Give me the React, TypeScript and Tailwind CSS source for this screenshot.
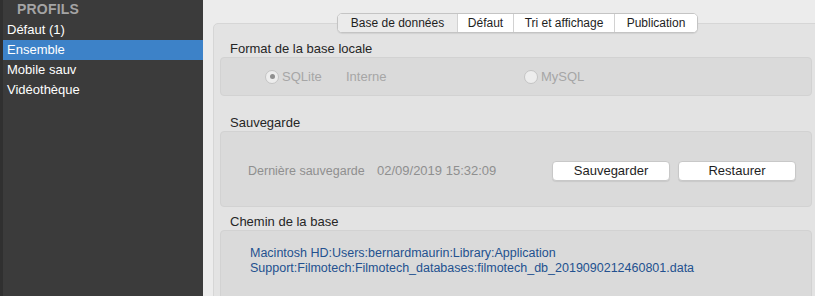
import React from "react";

function Radio({ checked }: { checked?: boolean }) {
  return (
    <span className="w-[14px] h-[14px] rounded-full bg-[#ededed] border border-[#c4c4c4] flex items-center justify-center shrink-0">
      {checked && <span className="w-[5px] h-[5px] rounded-full bg-[#8f8f8f]" />}
    </span>
  );
}

export default function App() {
  const items = ["Défaut (1)", "Ensemble", "Mobile sauv", "Vidéothèque"];
  const tabs: [string, string, boolean][] = [
    ["Base de données", "w-[119px]", true],
    ["Défaut", "w-[56px]", false],
    ["Tri et affichage", "w-[101px]", false],
    ["Publication", "w-[83px]", false],
  ];
  return (
    <div className="w-[815px] h-[296px] overflow-hidden flex font-['Liberation_Sans',Arial,sans-serif]">
      <aside className="w-[203px] h-[296px] shrink-0 bg-[#3b3b3b] border-l-[3px] border-[#303030]">
        <div className="h-[19px] flex items-center pl-[14px] text-[14px] font-bold text-[#a4a4a4] tracking-[0.2px]">
          PROFILS
        </div>
        <div className="pt-[1px]">
          {items.map((it) => (
            <div
              key={it}
              className={
                "h-[20px] flex items-center pl-[4px] text-[13px] text-white " +
                (it === "Ensemble" ? "bg-[#3d82c8]" : "")
              }
            >
              {it}
            </div>
          ))}
        </div>
      </aside>
      <main className="w-[629px] shrink-0 h-[296px] bg-[#ececec] pt-[13px] px-[10px]">
        <div className="relative z-10 flex justify-center">
          <div className="flex h-[20px] bg-white border border-[#c4c4c4] rounded-[5px] shadow-[0_1px_1px_rgba(0,0,0,0.08)] overflow-hidden">
            {tabs.map(([t, w, sel], i) => (
              <div
                key={t}
                className={
                  w +
                  " flex items-center justify-center text-[12px] text-[#1e1e1e] " +
                  (sel ? "bg-[#ebebeb] " : "bg-white ") +
                  (i > 0 ? "border-l border-[#d2d2d2]" : "")
                }
              >
                {t}
              </div>
            ))}
          </div>
        </div>
        <div className="-mt-[10px] h-[300px] bg-[#e3e3e3] border border-[#d6d6d6] rounded-[5px] pl-[6px] pr-[9px] pt-[17px]">
          <div className="h-[16px] leading-[16px] pl-[10px] text-[13px] text-[#262626]">
            Format de la base locale
          </div>
          <div className="h-[39px] bg-[#dadada] border border-[#d2d2d2] rounded-[4px] flex items-center pl-[44px] text-[13px] text-[#a6a6a6]">
            <Radio checked />
            <span className="w-[67px] pl-[3px]">SQLite</span>
            <span className="w-[178px]">Interne</span>
            <Radio />
            <span className="pl-[3px]">MySQL</span>
          </div>

          <div className="mt-[19px] h-[16px] leading-[16px] pl-[10px] text-[13px] text-[#262626]">
            Sauvegarde
          </div>
          <div className="h-[76px] bg-[#dadada] border border-[#d2d2d2] rounded-[4px] flex items-center pl-[27px] pr-[15px] pt-[4px] text-[#8f8f8f]">
            <span className="w-[129px] text-[12.5px]">Dernière sauvegarde</span>
            <span className="text-[13px]">02/09/2019 15:32:09</span>
            <div className="ml-auto flex gap-[8px]">
              <button className="w-[118px] h-[20px] bg-white border border-[#c8c8c8] rounded-[4px] shadow-[0_1px_1px_rgba(0,0,0,0.08)] text-[13px] text-[#1e1e1e] flex items-center justify-center">
                Sauvegarder
              </button>
              <button className="w-[118px] h-[20px] bg-white border border-[#c8c8c8] rounded-[4px] shadow-[0_1px_1px_rgba(0,0,0,0.08)] text-[13px] text-[#1e1e1e] flex items-center justify-center">
                Restaurer
              </button>
            </div>
          </div>

          <div className="mt-[7px] h-[16px] leading-[16px] pl-[10px] text-[13px] text-[#262626]">
            Chemin de la base
          </div>
          <div className="h-[100px] bg-[#dadada] border border-[#d2d2d2] rounded-[4px] pl-[29px] pt-[15px] text-[12.5px] leading-[15px] text-[#23518f]">
            <div>Macintosh HD:Users:bernardmaurin:Library:Application</div>
            <div>Support:Filmotech:Filmotech_databases:filmotech_db_2019090212460801.data</div>
          </div>
        </div>
      </main>
    </div>
  );
}
